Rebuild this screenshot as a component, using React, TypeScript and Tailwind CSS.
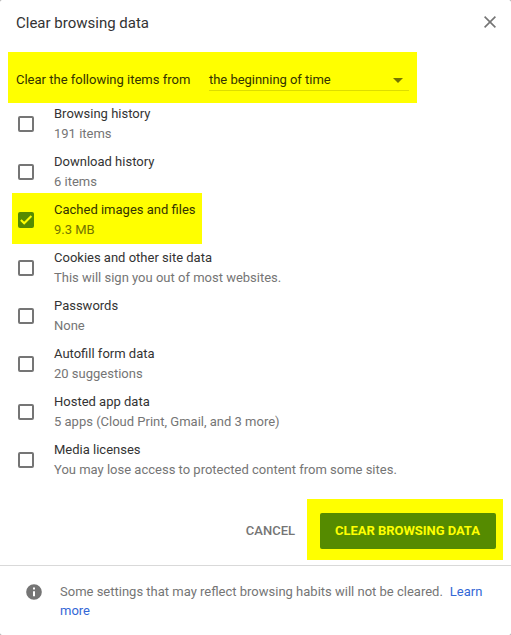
const items = [
  { title: "Browsing history", detail: "191 items" },
  { title: "Download history", detail: "6 items" },
  { title: "Cached images and files", detail: "9.3 MB", checked: true },
  { title: "Cookies and other site data", detail: "This will sign you out of most websites." },
  { title: "Passwords", detail: "None" },
  { title: "Autofill form data", detail: "20 suggestions" },
  { title: "Hosted app data", detail: "5 apps (Cloud Print, Gmail, and 3 more)" },
  { title: "Media licenses", detail: "You may lose access to protected content from some sites." },
];

function Checkbox({ checked }: { checked?: boolean }) {
  if (checked) {
    return (
      <span className="flex size-4 shrink-0 items-center justify-center rounded-xs bg-[#558b00]">
        <svg viewBox="0 0 16 16" className="size-4" fill="none" stroke="#ffff00" strokeWidth="2.1">
          <path d="M2.9 7.9 6.2 11.2 13.4 4" />
        </svg>
      </span>
    );
  }
  return <span className="size-4 shrink-0 rounded-xs border-2 border-[#757575]" />;
}

function Item({ title, detail, checked }: { title: string; detail: string; checked?: boolean }) {
  return (
    <div
      className={
        checked
          ? "-mt-[7px] ml-3 flex h-[51px] w-[190px] items-center gap-5 bg-[#ffff00] pt-[3px] pl-1.5 mb-1"
          : "mb-2 ml-[18px] flex h-10 items-center gap-5"
      }
    >
      <Checkbox checked={checked} />
      <div className="whitespace-nowrap leading-5">
        <div className={checked ? "text-[#333300]" : "text-[#333333]"}>{title}</div>
        <div className={checked ? "text-[#757500]" : "text-[#757575]"}>{detail}</div>
      </div>
    </div>
  );
}

export default function App() {
  return (
    <div className="h-[635px] w-[511px] overflow-hidden bg-[#a0a0a0] font-['Roboto',sans-serif] text-[13px]">
      <div className="flex h-full flex-col rounded-xs bg-white">
        <header className="flex h-[52px] shrink-0 items-start justify-between pt-3 pr-[15px] pl-4">
          <h1 className="text-[15px] leading-[22px] text-[#333333]">Clear browsing data</h1>
          <button aria-label="Close" className="mt-[4px]">
            <svg viewBox="0 0 12 12" className="size-3" stroke="#757575" strokeWidth="1.6">
              <path d="M.6.6 11.4 11.4M11.4.6.6 11.4" />
            </svg>
          </button>
        </header>

        <div className="ml-2 flex h-[51px] w-[409px] shrink-0 items-start bg-[#ffff00] pl-2 text-[#333300]">
          <span className="mt-[18px] w-[193px] whitespace-nowrap leading-5">Clear the following items from</span>
          <div className="mt-[18px] flex h-[21px] w-[200px] items-start justify-between border-b border-[#dddd00] pr-[6.5px] leading-5">
            <span className="tracking-[-0.03px]">the beginning of time</span>
            <svg viewBox="0 0 10 5" className="mt-2 h-[5px] w-2.5" fill="#757500">
              <path d="M0 0h10L5 5z" />
            </svg>
          </div>
        </div>

        <main className="mt-px">
          {items.map((item) => (
            <Item key={item.title} {...item} />
          ))}
        </main>

        <div className="mt-[11px] flex h-[67px] shrink-0 items-start justify-end border-b border-[#d9d9d9] pr-2 font-medium">
          <button className="mt-[14px] mr-3 h-9 text-[#757575]">CANCEL</button>
          <div className="h-[61px] w-[196px] bg-[#ffff00] pt-[14px] pl-[13px]">
            <button className="h-9 w-44 rounded-xs bg-[#558b00] pr-px font-bold tracking-[-0.04px] text-[#ffff00]">CLEAR BROWSING DATA</button>
          </div>
        </div>

        <footer className="flex items-start pt-4 pl-6 leading-[19px] text-[#757575]">
          <svg viewBox="0 0 24 24" className="size-5 shrink-0" fill="#757575">
            <path d="M12 2.6a9.4 9.4 0 1 0 0 18.8 9.4 9.4 0 0 0 0-18.8zm1.2 14.4h-2.4v-6h2.4zm0-8h-2.4V6.6h2.4z" />
          </svg>
          <p className="ml-4 w-[430px]">
            Some settings that may reflect browsing habits will not be cleared.
            <a className="ml-[7px] text-[#3367d6]">Learn<br />more</a>
          </p>
        </footer>
      </div>
    </div>
  );
}
